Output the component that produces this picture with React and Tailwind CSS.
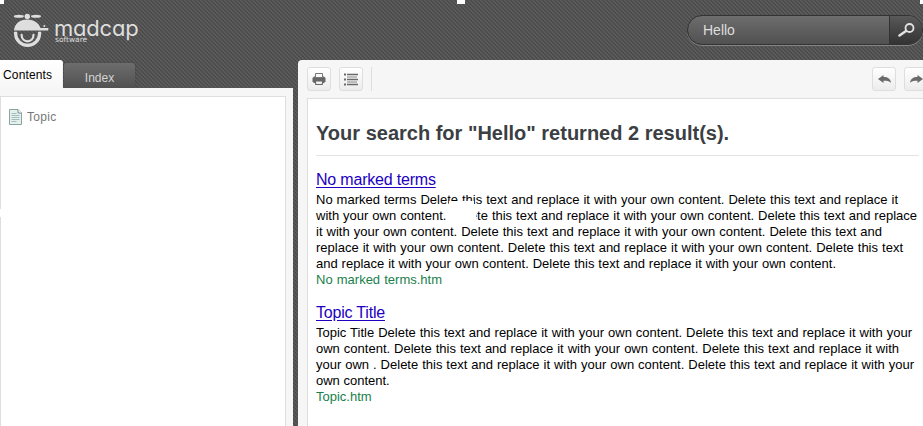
import React from "react";

const weave = "bg-[#545454] bg-[repeating-linear-gradient(45deg,#4c4c4c_0px,#4c4c4c_1.41px,#5b5b5b_1.42px,#5b5b5b_2.828px)]";

function Logo() {
  return (
    <svg width="36" height="38" viewBox="0 0 36 38" fill="none" stroke="#dedede">
      <ellipse cx="5.900" cy="6.200" rx="5" ry="1.500" fill="#dedede" stroke="none" />
      <ellipse cx="23" cy="6.200" rx="5" ry="1.500" fill="#dedede" stroke="none" />
      <circle cx="14.300" cy="6.400" r="2.700" fill="#dedede" stroke="none" />
      <path d="M1 20.600C1.500 14 6.500 9.500 14.300 9.500c7 0 11.500 3.500 13.200 8.600h7.800v2.500z" fill="#dedede" stroke="none" />
      <circle cx="31.300" cy="16" r="1" fill="#dedede" stroke="none" />
      <path d="M2.600 21.700v1.700a11.900 11.900 0 0 0 24 0v-1.700" strokeWidth="3.200" />
      <path d="M8.600 24.800c0 4 2.500 6.500 5.900 6.500s6-2.500 6-6.500" strokeWidth="2.200" strokeLinecap="round" />
    </svg>
  );
}

function ToolButton({ children }) {
  return (
    <button className="flex h-6 w-6 shrink-0 items-center justify-center rounded-[3px] border border-[#dedede] bg-linear-to-b from-white to-[#ececec]">
      {children}
    </button>
  );
}

function Arrow({ flip }) {
  return (
    <svg width="13" height="9" viewBox="0 0 13 9" fill="#6a6a6a" className={flip ? "-scale-x-100" : ""}>
      <path d="M0 4L5.500 0v2c4.500 0 7 2 7.500 5.800C11 6 9 5.800 5.500 5.800V8z" />
    </svg>
  );
}

function Line({ w, children }) {
  return (
    <div className="h-4 whitespace-nowrap text-justify [text-align-last:justify]" style={{ width: w }}>
      {children}
    </div>
  );
}

export default function App() {
  return (
    <div className={"relative flex h-[426px] w-[923px] flex-col overflow-hidden font-['Liberation_Sans',Arial,sans-serif] " + weave}>
      <header className="flex h-[60px] shrink-0 justify-between">
        <div className="flex pt-[10px] pl-[13px] text-[#dedede]">
          <Logo />
          <div className="pt-[7px] pl-[5px]">
            <div className="h-[18px] w-[86px] font-[Inter] text-[22px] leading-[22px] font-normal tracking-[-0.2px] [font-feature-settings:'cv11','ss01']">madcap</div>
            <div className="pl-px font-['DejaVu_Sans'] text-[7.500px] leading-[9px]">software</div>
          </div>
        </div>
        <div className="mt-[15px] flex h-[30px] w-[236px] shrink-0 overflow-hidden rounded-[15px] border border-[#333] bg-linear-to-b from-[#6d6d6d] to-[#515151] shadow-[0_1px_0_#858585]">
          <div className="w-[201px] pl-[15px] text-[14px] leading-[29px] text-[#dedede]">Hello</div>
          <div className="flex flex-1 items-center border-l border-[#333] bg-linear-to-b from-[#595959] to-[#333] pl-2">
            <svg width="17" height="14" viewBox="0 0 17 14" fill="none" stroke="#e2e2e2">
              <circle cx="11.500" cy="5" r="4" strokeWidth="1.800" />
              <path d="M8 8L1.500 12.500" strokeWidth="2.500" strokeLinecap="round" />
            </svg>
          </div>
        </div>
      </header>
      <div className="flex min-h-0 flex-1">
        <aside className="flex w-[293px] shrink-0 flex-col">
          <div className="flex h-7 items-end">
            <div className="h-7 w-[63px] rounded-tr-[3px] bg-linear-to-b from-white to-[#f7f7f7] pl-[3px] text-[12px] leading-[30px] tracking-[0.15px] text-black">Contents</div>
            <div className="ml-px h-[25px] w-[71px] rounded-t-[3px] bg-linear-to-b from-[#6d6d6d] to-[#515151] text-center text-[12px] leading-[30px] text-[#d4d4d4] shadow-[0_0_2px_#444]">Index</div>
          </div>
          <div className="flex-1 bg-[#f6f6f6] pt-2 pr-[7px]">
            <div className="h-full border-t border-r border-l border-[#dedede] bg-white pt-[11px] pl-[8px]">
              <div className="flex items-center text-[12px] leading-[18px] tracking-[0.3px] text-[#777]">
                <svg width="13" height="16" viewBox="0 0 13 16" className="mr-[5px]">
                  <path d="M.5.500h8.500l3.500 3.500v11.500H.5z" fill="#e5f0ee" stroke="#89a5a0" />
                  <path d="M9 .5V4h3.500" fill="#fff" stroke="#6f8f89" />
                  <path d="M2.500 4.500h5M2.500 6.500h8M2.500 8.500h8M2.500 10.500h8M2.500 12.500h5" stroke="#a3bdb8" />
                </svg>
                Topic
              </div>
            </div>
          </div>
        </aside>
        <main className="ml-[5px] flex min-w-0 flex-1 flex-col rounded-tl-[4px] bg-[#f6f6f6]">
          <div className="flex h-[38px] shrink-0 pt-[7px] pl-[9px]">
            <ToolButton>
              <svg width="14" height="14" viewBox="0 0 14 14">
                <path d="M2 4.500h10l1.500 1.500v3.500l-1.500 1.500H2L.5 9.500V6z" fill="#666" />
                <path d="M3.500 5.500v-4h7v4z" fill="#f7f7f7" stroke="#777" />
                <path d="M3.200 9l.6 3.500h6.400l.6-3.500z" fill="#f1f1f1" stroke="#666" strokeWidth="1.200" />
                <path d="M1.500 7.500h11" stroke="#666" strokeWidth="3" />
              </svg>
            </ToolButton>
            <div className="w-2" />
            <ToolButton>
              <svg width="14" height="13" viewBox="0 0 14 13" fill="none" stroke="#6a6a6a">
                <path d="M0 1.500h2M0 6.500h2M0 11.500h2" strokeWidth="2" />
                <path d="M3 1.500h11M3 6.500h11M3 11.500h11" strokeWidth="1.500" />
                <path d="M3 4h10M3 9h10" strokeWidth="0.800" />
              </svg>
            </ToolButton>
            <div className="ml-[8px] h-6 w-px bg-[#dedede]" />
            <div className="mr-[-5px] ml-auto flex shrink-0 gap-2">
              <ToolButton><Arrow /></ToolButton>
              <ToolButton><Arrow flip /></ToolButton>
            </div>
          </div>
          <section className="ml-[9px] flex-1 border-t border-l border-[#dedede] bg-white pl-[8px]">
            <h1 className="mr-[4px] h-[57px] border-b border-[#e4e4e4] pt-[21px] text-[20px] leading-[26px] font-bold whitespace-nowrap text-[#3b3f43]">Your search for "Hello" returned 2 result(s).</h1>
            <article className="pt-[15px] text-[13px] leading-4 text-black">
              <a className="block h-[21px] text-[16px] leading-[18px] tracking-[-0.2px] text-[#2200c1] underline underline-offset-2">No marked terms</a>
              <div className="relative">
                <Line w={582}>No marked terms Delete this text and replace it with your own content. Delete this text and replace it</Line>
                <Line w={601}>with your own content. Delete this text and replace it with your own content. Delete this text and replace</Line>
                <Line w={566}>it with your own content. Delete this text and replace it with your own content. Delete this text and</Line>
                <Line w={587}>replace it with your own content. Delete this text and replace it with your own content. Delete this text</Line>
                <Line w={520}>and replace it with your own content. Delete this text and replace it with your own content.</Line>
                <div className="absolute top-[9px] left-[133px] h-[22px] w-[25px] bg-white" />
                <div className="absolute top-[17px] left-[157px] h-[14px] w-[3px] bg-white" />
              </div>
              <div className="text-[#19804b]"><Line w={126}>No marked terms.htm</Line></div>
            </article>
            <article className="pt-[16px] text-[13px] leading-4 text-black">
              <a className="block h-[21px] text-[16px] leading-[18px] tracking-[-0.2px] text-[#2200c1] underline underline-offset-2">Topic Title</a>
              <Line w={596}>Topic Title Delete this text and replace it with your own content. Delete this text and replace it with your</Line>
              <Line w={583}>own content. Delete this text and replace it with your own content. Delete this text and replace it with</Line>
              <Line w={598}>your own . Delete this text and replace it with your own content. Delete this text and replace it with your</Line>
              <Line w={73}>own content.</Line>
              <div className="text-[#19804b]"><Line w={56}>Topic.htm</Line></div>
            </article>
          </section>
        </main>
      </div>
      <div className="absolute top-0 left-0 h-1 w-1 bg-white" />
      <div className="absolute top-0 left-[457px] h-1 w-2 bg-white" />
      <div className="absolute top-0 right-0 h-1 w-[3px] bg-white" />
      <div className="absolute top-[209px] left-0 h-2 w-1 bg-white" />
    </div>
  );
}
